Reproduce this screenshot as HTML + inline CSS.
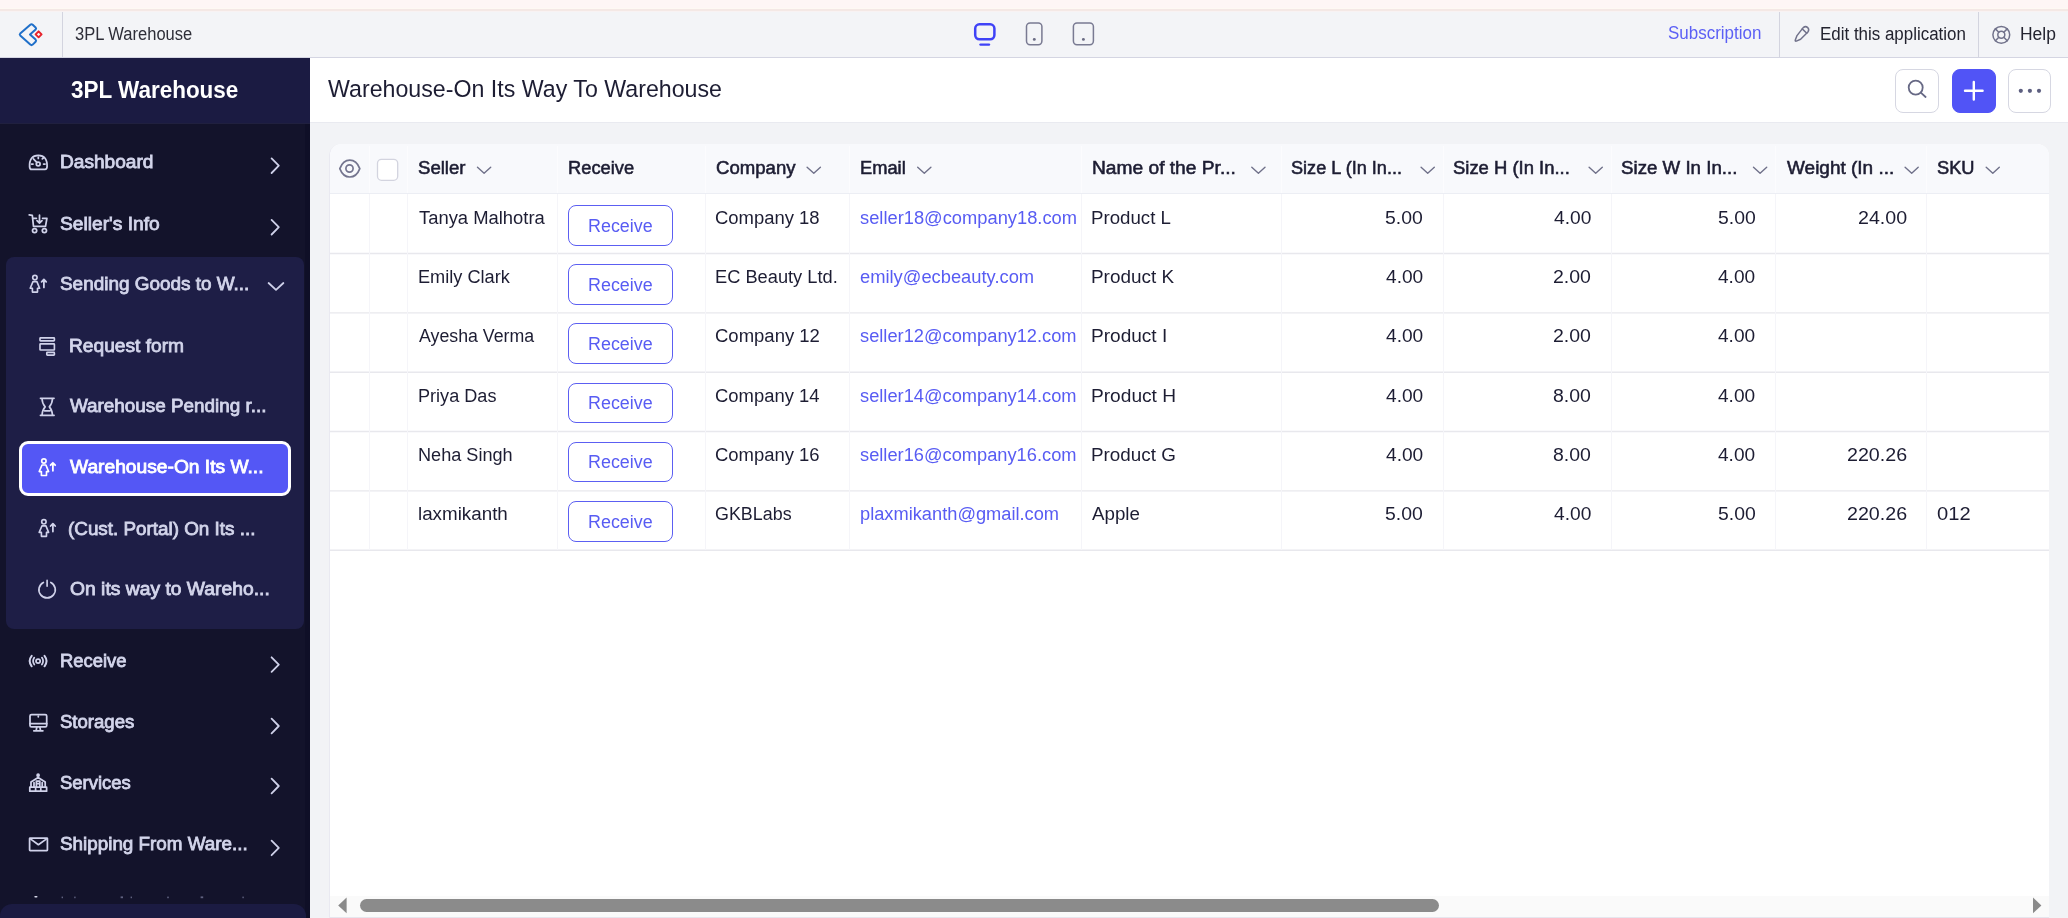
<!DOCTYPE html>
<html>
<head>
<meta charset="utf-8">
<title>3PL Warehouse</title>
<style>
*{box-sizing:border-box;margin:0;padding:0}
html,body{width:2068px;height:918px;overflow:hidden;background:#f2f3f6;font-family:"Liberation Sans",sans-serif;color:#1c1c30}
.a{position:absolute}
.t{position:absolute;white-space:nowrap;line-height:1;transform-origin:0 0}
#tx{position:absolute;left:0;top:0;width:2068px;height:918px;will-change:transform}
svg{position:absolute;overflow:visible}
#strip{left:0;top:0;width:2068px;height:12px;background:#fef6f5}
#strip2{left:0;top:9px;width:2068px;height:2px;background:#f4e8e5}
#topbar{left:0;top:12px;width:2068px;height:46px;background:#f3f4f7;border-bottom:1px solid #d4d5e2}
.vd{position:absolute;top:12px;width:1px;height:45px;background:#d3d4df}
#side{left:0;top:58px;width:310px;height:860px;background:#13132b}
#sidehead{left:0;top:58px;width:310px;height:65px;background:#1b1b42}
#sideheadb{left:0;top:123px;width:310px;height:1px;background:#20203f}
#grp{left:6px;top:257px;width:298px;height:372px;background:#1e1e46;border-radius:8px}
#act{left:19px;top:441px;width:272px;height:55px;background:#5457f5;border:3px solid #fff;border-radius:9px}
#foot{left:0;top:904px;width:306px;height:20px;background:#1b1b42;border-radius:12px 12px 0 0}
#mainhead{left:310px;top:58px;width:1758px;height:65px;background:#fff;border-bottom:1px solid #e9eaf0}
#card{left:329px;top:144px;width:1720px;height:790px;background:#fff;border-radius:12px 12px 0 0;overflow:hidden;border-left:1px solid #e9e9f1}
#thead{left:0;top:0;width:1719px;height:50px;background:#f8f9fc;border-bottom:1px solid #eceef4}
.hl{position:absolute;left:330px;width:1719px;height:1.4px;background:#e8eaf0}
.vl{position:absolute;top:194px;width:1px;height:356px;background:#f5f5f9}
.vh{position:absolute;top:146px;width:1px;height:47px;background:#fcfcfe}
.btn{position:absolute;left:568px;width:105px;height:40.5px;border:1.5px solid #5c5ff2;border-radius:8px;background:#fff}
.ib{position:absolute;top:69px;width:44px;height:44px;border-radius:8px;background:#fff;border:1px solid #d6d7e2}
#track{left:330px;top:896px;width:1719px;height:22px;background:#fafafa}
#thumb{left:360px;top:898.5px;width:1079px;height:13.5px;border-radius:7px;background:#8b8b8b}
</style>
</head>
<body>
<div id="strip" class="a"></div><div id="strip2" class="a"></div><div class="a" style="left:0;top:8px;width:2068px;height:1px;background:#fef9f3"></div><div class="a" style="left:0;top:11px;width:2068px;height:1.5px;background:#f8f2f3"></div>
<div id="topbar" class="a"></div>
<div class="vd" style="left:62px"></div>
<div class="vd" style="left:1779px"></div>
<div class="vd" style="left:1978px"></div>
<div id="side" class="a"></div>
<div id="sidehead" class="a"></div><div id="sideheadb" class="a"></div>
<div class="a" style="left:305px;top:124px;width:5px;height:794px;background:#0f0f27"></div>
<div id="grp" class="a"></div>
<div id="act" class="a"></div>
<div id="mainhead" class="a"></div>
<div id="card" class="a"><div id="thead" class="a"></div></div>
<svg class="a" style="left:0;top:0" width="2068" height="918" viewBox="0 0 2068 918" fill="none"><path d="M330 253.50 H2049" stroke="#e8e8ed" stroke-width="1.4"/><path d="M330 312.84 H2049" stroke="#e8e8ed" stroke-width="1.4"/><path d="M330 372.18 H2049" stroke="#e8e8ed" stroke-width="1.4"/><path d="M330 431.52 H2049" stroke="#e8e8ed" stroke-width="1.4"/><path d="M330 490.86 H2049" stroke="#e8e8ed" stroke-width="1.4"/><path d="M330 550.20 H2049" stroke="#e8e8ed" stroke-width="1.4"/></svg>
<div class="vl" style="left:368.5px"></div>
<div class="vh" style="left:368.5px"></div>
<div class="vl" style="left:407px"></div>
<div class="vh" style="left:407px"></div>
<div class="vl" style="left:557px"></div>
<div class="vh" style="left:557px"></div>
<div class="vl" style="left:704.5px"></div>
<div class="vh" style="left:704.5px"></div>
<div class="vl" style="left:848.5px"></div>
<div class="vh" style="left:848.5px"></div>
<div class="vl" style="left:1080.5px"></div>
<div class="vh" style="left:1080.5px"></div>
<div class="vl" style="left:1281px"></div>
<div class="vh" style="left:1281px"></div>
<div class="vl" style="left:1442.5px"></div>
<div class="vh" style="left:1442.5px"></div>
<div class="vl" style="left:1610.5px"></div>
<div class="vh" style="left:1610.5px"></div>
<div class="vl" style="left:1774.5px"></div>
<div class="vh" style="left:1774.5px"></div>
<div class="vl" style="left:1926px"></div>
<div class="vh" style="left:1926px"></div>
<div id="track" class="a"></div>
<div id="thumb" class="a"></div>
<div class="a" style="left:330px;top:917px;width:1719px;height:1px;background:#e6e6ee"></div>
<div class="btn" style="top:205.0px"></div>
<div class="btn" style="top:264.2px"></div>
<div class="btn" style="top:323.4px"></div>
<div class="btn" style="top:382.6px"></div>
<div class="btn" style="top:441.8px"></div>
<div class="btn" style="top:501.0px"></div>
<div class="ib" style="left:1895px"></div>
<div class="ib" style="left:1952px;background:#5154f6;border-color:#5154f6"></div>
<div class="ib" style="left:2008px;width:43px"></div>
<svg class="a" style="left:0;top:0" width="2068" height="918" viewBox="0 0 2068 918" fill="none" stroke-linecap="round" stroke-linejoin="round">
<!-- logo -->
<g stroke="#1f6fc9" stroke-width="2">
<path d="M30.3 24.7 Q31.5 23.7 32.7 24.7 L35.6 27.4 Q36.6 28.5 35.6 29.6 L30 34.5 L35.6 39.6 Q36.6 40.7 35.6 41.8 L32.7 44.6 Q31.5 45.6 30.3 44.6 L20.2 35.4 Q19.3 34.5 20.2 33.6 Z"/>
</g>
<path d="M38.6 31.3 L41.6 34.3 L38.6 37.3 L35.6 34.3 Z" stroke="#e6222c" stroke-width="1.9" fill="#f6eef2"/>
<!-- device icons -->
<rect x="975.2" y="24.3" width="19.2" height="15" rx="4.2" stroke="#3f42f7" stroke-width="2.5"/>
<path d="M980.5 44.6 H989" stroke="#3f42f7" stroke-width="2.4"/>
<rect x="1026.5" y="22.9" width="15.4" height="21.8" rx="3.6" stroke="#797a92" stroke-width="1.5"/>
<circle cx="1034.3" cy="39.4" r="1.45" fill="#6b6c84" stroke="none"/>
<rect x="1073.4" y="22.9" width="20" height="21.8" rx="3.6" stroke="#797a92" stroke-width="1.5"/>
<circle cx="1083.4" cy="39.4" r="1.45" fill="#6b6c84" stroke="none"/>
<!-- pencil -->
<g stroke="#71728b" stroke-width="1.5">
<path d="M1803.2 27.6 Q1805.6 25.6 1807.7 27.6 Q1809.6 29.6 1807.9 32 L1800.6 39.3 L1796.3 41.1 Q1794.9 41.4 1795.3 40 L1797 35.6 Z"/>
<path d="M1802.2 28.9 L1806.8 33.3"/>
</g>
<!-- help -->
<g stroke="#71728b" stroke-width="1.5">
<circle cx="2001.3" cy="34.8" r="8.4"/><circle cx="2001.3" cy="34.8" r="3.5"/>
<path d="M1995.4 28.9 L1998.8 32.3 M2007.2 28.9 L2003.8 32.3 M1995.4 40.7 L1998.8 37.3 M2007.2 40.7 L2003.8 37.3"/>
</g>
<!-- search / plus / dots -->
<g stroke="#676985" stroke-width="1.8"><circle cx="1915.7" cy="87.6" r="7"/><path d="M1920.8 92.6 L1925.6 97"/></g>
<path d="M1973.8 82 V99.6 M1965 90.8 H1982.6" stroke="#fff" stroke-width="2.4"/>
<g fill="#5d5f80" stroke="none"><circle cx="2020.8" cy="90.8" r="2.1"/><circle cx="2029.9" cy="90.8" r="2.1"/><circle cx="2039" cy="90.8" r="2.1"/></g>
<!-- eye + checkbox -->
<g stroke="#74758f" stroke-width="1.7"><path d="M339.8 168.6 C341.8 163.4 345.6 160.2 349.8 160.2 C354 160.2 357.8 163.4 359.8 168.6 C357.8 173.8 354 177 349.8 177 C345.6 177 341.8 173.8 339.8 168.6 Z"/><circle cx="349.5" cy="168.5" r="3.6"/></g>
<rect x="377.5" y="159.3" width="20.2" height="21" rx="4" fill="#fff" stroke="#d3d4df" stroke-width="1.3"/>
<path d="M477.5 167.2 L484.1 173.2 L490.7 167.2" stroke="#6f7089" stroke-width="1.4"/>
<path d="M807.1 167.2 L813.8 173.2 L820.4 167.2" stroke="#6f7089" stroke-width="1.4"/>
<path d="M917.7 167.2 L924.3 173.2 L930.9 167.2" stroke="#6f7089" stroke-width="1.4"/>
<path d="M1251.8 167.2 L1258.4 173.2 L1265.0 167.2" stroke="#6f7089" stroke-width="1.4"/>
<path d="M1421.1 167.2 L1427.7 173.2 L1434.3 167.2" stroke="#6f7089" stroke-width="1.4"/>
<path d="M1589.1 167.2 L1595.7 173.2 L1602.3 167.2" stroke="#6f7089" stroke-width="1.4"/>
<path d="M1753.5 167.2 L1760.1 173.2 L1766.7 167.2" stroke="#6f7089" stroke-width="1.4"/>
<path d="M1905.1 167.2 L1911.7 173.2 L1918.2 167.2" stroke="#6f7089" stroke-width="1.4"/>
<path d="M1986.2 167.2 L1992.8 173.2 L1999.3 167.2" stroke="#6f7089" stroke-width="1.4"/>
<!-- nav chevrons -->
<path d="M271.6 158.4 L278.8 165.7 L271.6 173.0" stroke="#cfd1ea" stroke-width="1.8"/>
<path d="M271.6 219.9 L278.8 227.2 L271.6 234.5" stroke="#cfd1ea" stroke-width="1.8"/>
<path d="M271.6 657.3 L278.8 664.6 L271.6 671.9" stroke="#cfd1ea" stroke-width="1.8"/>
<path d="M271.6 718.7 L278.8 726.0 L271.6 733.3" stroke="#cfd1ea" stroke-width="1.8"/>
<path d="M271.6 778.7 L278.8 786.0 L271.6 793.3" stroke="#cfd1ea" stroke-width="1.8"/>
<path d="M271.6 840.6 L278.8 847.9 L271.6 855.2" stroke="#cfd1ea" stroke-width="1.8"/>
<path d="M268.6 283 L276 289.8 L283.4 283" stroke="#cfd1ea" stroke-width="1.8"/>
<!-- nav icons -->
<g stroke="#d0d2ea" stroke-width="1.75">
<!-- dashboard -->
<path d="M31.6 169.4 Q29.7 169.4 29.6 166.6 Q29.2 155.4 38.3 155.3 Q47.4 155.4 47.1 166.6 Q47 169.4 45 169.4 Z"/>
<circle cx="38.2" cy="163.9" r="1.9"/><path d="M36.8 162.4 L33.4 158.9 M31.6 164 H33 M43.6 164 H45 M38.3 157.2 V158.4 M42.3 158.9 L43.3 158"/>
<!-- cart -->
<path d="M29.2 214.9 L32.3 215.4 L33.5 226.4 H45.5 L46.9 218.3 H42.6 M36.4 218.3 H33"/>
<path d="M39.5 215.2 V222.6 M37 220.6 L39.5 223 L42 220.6"/>
<circle cx="34.6" cy="230.6" r="2.1"/><circle cx="44.4" cy="230.6" r="2.1"/>
<!-- receive -->
<circle cx="38.1" cy="661.1" r="2.1"/>
<path d="M34.3 657.6 Q31.9 661.1 34.3 664.6 M41.9 657.6 Q44.3 661.1 41.9 664.6"/>
<path d="M31.7 655.9 Q27.6 661.1 31.7 666.3 M44.5 655.9 Q48.6 661.1 44.5 666.3" stroke-width="2"/>
<!-- storages -->
<rect x="30" y="714.5" width="16.7" height="12.4" rx="1.5"/><path d="M30 723.6 H46.7 M36.8 727 L36.2 730.6 M39.9 727 L40.5 730.6 M33.8 730.8 H42.9 M38.3 716.2 V716.8"/>
<!-- services -->
<circle cx="38.1" cy="775.2" r="1" fill="#cfd1ea"/>
<path d="M31 786.8 V781.9 L38.1 777.6 L45.2 781.9 V786.8 M29.8 791.2 V787.2 H46.6 V791.2 Z M34 786.6 V782.6 M42.2 786.6 V782.6 M36.4 786.6 V781 H39.8 V786.6 M36.6 783.6 H39.6 M35.6 791 V788.6 M40.8 791 V788.6"/>
<!-- shipping -->
<rect x="29.6" y="838.1" width="17.8" height="12.4" rx="0.5"/><path d="M30.4 838.9 L38.4 844.7 L46.6 838.9"/>
</g>
<!-- sub icons -->
<g stroke="#d0d2ea" stroke-width="1.65">
<!-- person-up (group header) -->
<g><circle cx="34.9" cy="277.6" r="2.2"/><path d="M33 281.6 H36.9 L39.6 288.2 H37.5 V292.1 H32.4 V288.2 H30.2 Z"/><path d="M43.9 287.4 V279.6 M41.6 281.8 L43.9 279.4 L46.2 281.8" stroke-width="1.8"/></g>
<!-- request form -->
<rect x="40" y="337.9" width="14.4" height="3" rx="0.6"/><rect x="40" y="343.8" width="14.4" height="6.2" rx="0.6"/><rect x="46.8" y="352.4" width="7.6" height="2.8" rx="0.6"/>
<!-- hourglass -->
<path d="M40.4 398.3 H54.1 M40.4 415.4 H54.1 M42 398.8 Q42.2 403.6 45.2 406.9 Q42.2 410.2 42 415 M52.5 398.8 Q52.3 403.6 49.3 406.9 Q52.3 410.2 52.5 415 M44.6 410.9 H50"/>
<!-- power -->
<path d="M43.4 582.4 A8.2 8.2 0 1 0 50.8 582.4 M47.1 580.4 V586.2"/>
</g>
<g transform="translate(9 244.2)" stroke="#d0d2ea" stroke-width="1.65"><circle cx="34.9" cy="277.6" r="2.2"/><path d="M33 281.6 H36.9 L39.6 288.2 H37.5 V292.1 H32.4 V288.2 H30.2 Z"/><path d="M43.9 287.4 V279.6 M41.6 281.8 L43.9 279.4 L46.2 281.8" stroke-width="1.8"/></g>
<g transform="translate(9 183.4)" stroke="#ffffff" stroke-width="1.65"><circle cx="34.9" cy="277.6" r="2.2"/><path d="M33 281.6 H36.9 L39.6 288.2 H37.5 V292.1 H32.4 V288.2 H30.2 Z"/><path d="M43.9 287.4 V279.6 M41.6 281.8 L43.9 279.4 L46.2 281.8" stroke-width="1.8"/></g>
<g fill="#5f617f" stroke="none"><rect x="34.3" y="896" width="3.2" height="1.6" rx="0.8" fill="#d8d9ea"/><rect x="61.6" y="896.6" width="1.4" height="1.6"/><rect x="74.2" y="896.6" width="1.4" height="1.6"/><rect x="120.6" y="896.4" width="2.4" height="1.8"/><rect x="130.6" y="896.6" width="1.4" height="1.6"/><rect x="167.2" y="896.6" width="1.6" height="1.6"/><rect x="200.6" y="896.4" width="2.6" height="1.8"/><rect x="242.4" y="896.6" width="1.4" height="1.6"/></g>
<!-- scrollbar arrows -->
<path d="M346.6 897.6 V913.2 L338.2 905.4 Z" fill="#8a8a8a" stroke="none"/>
<path d="M2033 897.6 V913.2 L2041.4 905.4 Z" fill="#8a8a8a" stroke="none"/>
</svg>

<div id="tx">
<div class="t" style="left:74.99px;top:25.0px;font-size:18px;color:#2e2e38;transform:scaleX(0.9174)">3PL Warehouse</div>
<div class="t" style="left:1667.65px;top:24.0px;font-size:18px;color:#5b5ff5;transform:scaleX(0.9429)">Subscription</div>
<div class="t" style="left:1819.67px;top:25.0px;font-size:18px;color:#23232f;transform:scaleX(0.9408)">Edit this application</div>
<div class="t" style="left:2020.42px;top:25.0px;font-size:18px;color:#23232f;transform:scaleX(0.9709)">Help</div>
<div class="t" style="left:71.14px;top:77.5px;font-size:24px;color:#ffffff;transform:scaleX(0.9363);font-weight:bold">3PL Warehouse</div>
<div class="t" style="left:59.64px;top:153.0px;font-size:18px;color:#d3d5eb;transform:scaleX(1.0611);-webkit-text-stroke:0.8px #d3d5eb">Dashboard</div>
<div class="t" style="left:59.55px;top:215.0px;font-size:18px;color:#d3d5eb;transform:scaleX(1.0661);-webkit-text-stroke:0.8px #d3d5eb">Seller's Info</div>
<div class="t" style="left:60.06px;top:275.0px;font-size:18px;color:#d3d5eb;transform:scaleX(1.0513);-webkit-text-stroke:0.8px #d3d5eb">Sending Goods to W...</div>
<div class="t" style="left:68.84px;top:337.0px;font-size:18px;color:#d3d5eb;transform:scaleX(1.0645);-webkit-text-stroke:0.8px #d3d5eb">Request form</div>
<div class="t" style="left:70.13px;top:397.0px;font-size:18px;color:#d3d5eb;transform:scaleX(1.0476);-webkit-text-stroke:0.8px #d3d5eb">Warehouse Pending r...</div>
<div class="t" style="left:70.14px;top:458.0px;font-size:18px;color:#ffffff;transform:scaleX(1.0669);-webkit-text-stroke:0.8px #ffffff">Warehouse-On Its W...</div>
<div class="t" style="left:68.27px;top:520.0px;font-size:18px;color:#d3d5eb;transform:scaleX(1.0465);-webkit-text-stroke:0.8px #d3d5eb">(Cust. Portal) On Its ...</div>
<div class="t" style="left:69.52px;top:580.0px;font-size:18px;color:#d3d5eb;transform:scaleX(1.0717);-webkit-text-stroke:0.8px #d3d5eb">On its way to Wareho...</div>
<div class="t" style="left:59.68px;top:652.0px;font-size:18px;color:#d3d5eb;transform:scaleX(1.0236);-webkit-text-stroke:0.8px #d3d5eb">Receive</div>
<div class="t" style="left:59.57px;top:713.0px;font-size:18px;color:#d3d5eb;transform:scaleX(1.0301);-webkit-text-stroke:0.8px #d3d5eb">Storages</div>
<div class="t" style="left:59.58px;top:774.0px;font-size:18px;color:#d3d5eb;transform:scaleX(1.0256);-webkit-text-stroke:0.8px #d3d5eb">Services</div>
<div class="t" style="left:59.56px;top:835.0px;font-size:18px;color:#d3d5eb;transform:scaleX(1.0468);-webkit-text-stroke:0.8px #d3d5eb">Shipping From Ware...</div>
<div class="t" style="left:328.14px;top:77.2px;font-size:24.5px;color:#1d1d33;transform:scaleX(0.9466)">Warehouse-On Its Way To Warehouse</div>
<div class="t" style="left:417.89px;top:159.0px;font-size:18px;color:#1d1d33;transform:scaleX(1.0329);-webkit-text-stroke:0.55px #1d1d33">Seller</div>
<div class="t" style="left:567.60px;top:159.0px;font-size:18px;color:#1d1d33;transform:scaleX(1.0160);-webkit-text-stroke:0.55px #1d1d33">Receive</div>
<div class="t" style="left:715.60px;top:159.0px;font-size:18px;color:#1d1d33;transform:scaleX(1.0324);-webkit-text-stroke:0.55px #1d1d33">Company</div>
<div class="t" style="left:860.10px;top:159.0px;font-size:18px;color:#1d1d33;transform:scaleX(1.0160);-webkit-text-stroke:0.55px #1d1d33">Email</div>
<div class="t" style="left:1091.54px;top:159.0px;font-size:18px;color:#1d1d33;transform:scaleX(1.0653);-webkit-text-stroke:0.55px #1d1d33">Name of the Pr...</div>
<div class="t" style="left:1290.61px;top:159.0px;font-size:18px;color:#1d1d33;transform:scaleX(1.0059);-webkit-text-stroke:0.55px #1d1d33">Size L (In In...</div>
<div class="t" style="left:1453.49px;top:159.0px;font-size:18px;color:#1d1d33;transform:scaleX(1.0238);-webkit-text-stroke:0.55px #1d1d33">Size H (In In...</div>
<div class="t" style="left:1621.28px;top:159.0px;font-size:18px;color:#1d1d33;transform:scaleX(1.0388);-webkit-text-stroke:0.55px #1d1d33">Size W In In...</div>
<div class="t" style="left:1786.70px;top:159.0px;font-size:18px;color:#1d1d33;transform:scaleX(1.0547);-webkit-text-stroke:0.55px #1d1d33">Weight (In ...</div>
<div class="t" style="left:1936.70px;top:159.0px;font-size:18px;color:#1d1d33;transform:scaleX(1.0147);-webkit-text-stroke:0.55px #1d1d33">SKU</div>
<div class="t" style="left:418.66px;top:209.0px;font-size:18px;color:#1d1d33;transform:scaleX(1.0223)">Tanya Malhotra</div>
<div class="t" style="left:715.27px;top:209.0px;font-size:18px;color:#1d1d33;transform:scaleX(1.0251)">Company 18</div>
<div class="t" style="left:860.03px;top:209.0px;font-size:18px;color:#585cf3;transform:scaleX(1.0170)">seller18@company18.com</div>
<div class="t" style="left:1090.93px;top:209.0px;font-size:18px;color:#1d1d33;transform:scaleX(1.0368)">Product L</div>
<div class="t" style="left:1385.25px;top:209.0px;font-size:18px;color:#1d1d33;transform:scaleX(1.0793)">5.00</div>
<div class="t" style="left:1553.65px;top:209.0px;font-size:18px;color:#1d1d33;transform:scaleX(1.0650)">4.00</div>
<div class="t" style="left:1717.65px;top:209.0px;font-size:18px;color:#1d1d33;transform:scaleX(1.0763)">5.00</div>
<div class="t" style="left:1857.83px;top:209.0px;font-size:18px;color:#1d1d33;transform:scaleX(1.0913)">24.00</div>
<div class="t" style="left:587.89px;top:217.0px;font-size:18px;color:#585cf3;transform:scaleX(0.9942)">Receive</div>
<div class="t" style="left:417.57px;top:268.0px;font-size:18px;color:#1d1d33;transform:scaleX(1.0094)">Emily Clark</div>
<div class="t" style="left:714.86px;top:268.0px;font-size:18px;color:#1d1d33;transform:scaleX(1.0137)">EC Beauty Ltd.</div>
<div class="t" style="left:859.98px;top:268.0px;font-size:18px;color:#585cf3;transform:scaleX(1.0183)">emily@ecbeauty.com</div>
<div class="t" style="left:1090.91px;top:268.0px;font-size:18px;color:#1d1d33;transform:scaleX(1.0508)">Product K</div>
<div class="t" style="left:1385.85px;top:268.0px;font-size:18px;color:#1d1d33;transform:scaleX(1.0620)">4.00</div>
<div class="t" style="left:1553.03px;top:268.0px;font-size:18px;color:#1d1d33;transform:scaleX(1.0828)">2.00</div>
<div class="t" style="left:1718.25px;top:268.0px;font-size:18px;color:#1d1d33;transform:scaleX(1.0591)">4.00</div>
<div class="t" style="left:587.89px;top:276.0px;font-size:18px;color:#585cf3;transform:scaleX(0.9942)">Receive</div>
<div class="t" style="left:418.87px;top:327.0px;font-size:18px;color:#1d1d33;transform:scaleX(0.9868)">Ayesha Verma</div>
<div class="t" style="left:715.27px;top:327.0px;font-size:18px;color:#1d1d33;transform:scaleX(1.0277)">Company 12</div>
<div class="t" style="left:860.03px;top:327.0px;font-size:18px;color:#585cf3;transform:scaleX(1.0151)">seller12@company12.com</div>
<div class="t" style="left:1090.90px;top:327.0px;font-size:18px;color:#1d1d33;transform:scaleX(1.0584)">Product I</div>
<div class="t" style="left:1385.85px;top:327.0px;font-size:18px;color:#1d1d33;transform:scaleX(1.0620)">4.00</div>
<div class="t" style="left:1553.03px;top:327.0px;font-size:18px;color:#1d1d33;transform:scaleX(1.0828)">2.00</div>
<div class="t" style="left:1718.25px;top:327.0px;font-size:18px;color:#1d1d33;transform:scaleX(1.0591)">4.00</div>
<div class="t" style="left:587.89px;top:335.0px;font-size:18px;color:#585cf3;transform:scaleX(0.9942)">Receive</div>
<div class="t" style="left:417.57px;top:387.0px;font-size:18px;color:#1d1d33;transform:scaleX(1.0053)">Priya Das</div>
<div class="t" style="left:715.28px;top:387.0px;font-size:18px;color:#1d1d33;transform:scaleX(1.0234)">Company 14</div>
<div class="t" style="left:860.03px;top:387.0px;font-size:18px;color:#585cf3;transform:scaleX(1.0151)">seller14@company14.com</div>
<div class="t" style="left:1090.89px;top:387.0px;font-size:18px;color:#1d1d33;transform:scaleX(1.0624)">Product H</div>
<div class="t" style="left:1385.85px;top:387.0px;font-size:18px;color:#1d1d33;transform:scaleX(1.0620)">4.00</div>
<div class="t" style="left:1553.10px;top:387.0px;font-size:18px;color:#1d1d33;transform:scaleX(1.0809)">8.00</div>
<div class="t" style="left:1718.25px;top:387.0px;font-size:18px;color:#1d1d33;transform:scaleX(1.0591)">4.00</div>
<div class="t" style="left:587.89px;top:394.0px;font-size:18px;color:#585cf3;transform:scaleX(0.9942)">Receive</div>
<div class="t" style="left:417.57px;top:446.0px;font-size:18px;color:#1d1d33;transform:scaleX(1.0062)">Neha Singh</div>
<div class="t" style="left:715.27px;top:446.0px;font-size:18px;color:#1d1d33;transform:scaleX(1.0252)">Company 16</div>
<div class="t" style="left:860.03px;top:446.0px;font-size:18px;color:#585cf3;transform:scaleX(1.0147)">seller16@company16.com</div>
<div class="t" style="left:1090.92px;top:446.0px;font-size:18px;color:#1d1d33;transform:scaleX(1.0470)">Product G</div>
<div class="t" style="left:1385.85px;top:446.0px;font-size:18px;color:#1d1d33;transform:scaleX(1.0620)">4.00</div>
<div class="t" style="left:1553.10px;top:446.0px;font-size:18px;color:#1d1d33;transform:scaleX(1.0809)">8.00</div>
<div class="t" style="left:1718.25px;top:446.0px;font-size:18px;color:#1d1d33;transform:scaleX(1.0591)">4.00</div>
<div class="t" style="left:1847.03px;top:446.0px;font-size:18px;color:#1d1d33;transform:scaleX(1.0922)">220.26</div>
<div class="t" style="left:587.89px;top:453.0px;font-size:18px;color:#585cf3;transform:scaleX(0.9942)">Receive</div>
<div class="t" style="left:417.82px;top:505.0px;font-size:18px;color:#1d1d33;transform:scaleX(1.0439)">laxmikanth</div>
<div class="t" style="left:715.31px;top:505.0px;font-size:18px;color:#1d1d33;transform:scaleX(0.9945)">GKBLabs</div>
<div class="t" style="left:859.69px;top:505.0px;font-size:18px;color:#585cf3;transform:scaleX(1.0139)">plaxmikanth@gmail.com</div>
<div class="t" style="left:1092.26px;top:505.0px;font-size:18px;color:#1d1d33;transform:scaleX(1.0412)">Apple</div>
<div class="t" style="left:1385.25px;top:505.0px;font-size:18px;color:#1d1d33;transform:scaleX(1.0793)">5.00</div>
<div class="t" style="left:1553.65px;top:505.0px;font-size:18px;color:#1d1d33;transform:scaleX(1.0650)">4.00</div>
<div class="t" style="left:1717.65px;top:505.0px;font-size:18px;color:#1d1d33;transform:scaleX(1.0763)">5.00</div>
<div class="t" style="left:1847.03px;top:505.0px;font-size:18px;color:#1d1d33;transform:scaleX(1.0922)">220.26</div>
<div class="t" style="left:1936.53px;top:505.0px;font-size:18px;color:#1d1d33;transform:scaleX(1.1182)">012</div>
<div class="t" style="left:587.89px;top:513.0px;font-size:18px;color:#585cf3;transform:scaleX(0.9942)">Receive</div>
</div>
<div id="foot" class="a"></div>
</body>
</html>
